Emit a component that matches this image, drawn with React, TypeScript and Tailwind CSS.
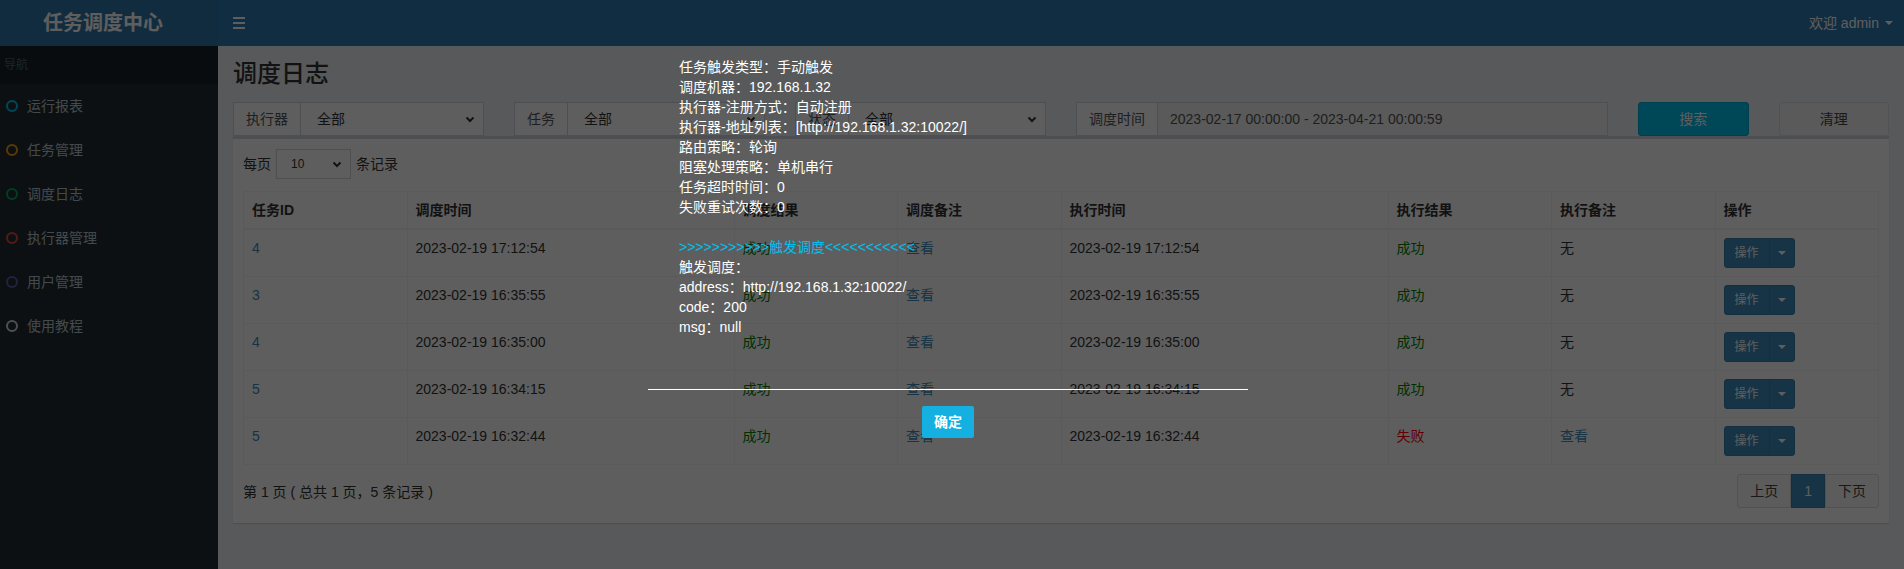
const menu = [
  { label: "运行报表", ring: "border-[#00c0ef]" },
  { label: "任务管理", ring: "border-[#f39c12]" },
  { label: "调度日志", ring: "border-[#00a65a]" },
  { label: "执行器管理", ring: "border-[#dd4b39]" },
  { label: "用户管理", ring: "border-[#605ca8]" },
  { label: "使用教程", ring: "border-[#d2d6de]" },
];

type LogRow = {
  jobId: string;
  triggerTime: string;
  handleTime: string;
  failed?: boolean;
};

const rows: LogRow[] = [
  { jobId: "4", triggerTime: "2023-02-19 17:12:54", handleTime: "2023-02-19 17:12:54" },
  { jobId: "3", triggerTime: "2023-02-19 16:35:55", handleTime: "2023-02-19 16:35:55" },
  { jobId: "4", triggerTime: "2023-02-19 16:35:00", handleTime: "2023-02-19 16:35:00" },
  { jobId: "5", triggerTime: "2023-02-19 16:34:15", handleTime: "2023-02-19 16:34:15" },
  { jobId: "5", triggerTime: "2023-02-19 16:32:44", handleTime: "2023-02-19 16:32:44", failed: true },
];

const detailLines = [
  "任务触发类型：手动触发",
  "调度机器：192.168.1.32",
  "执行器-注册方式：自动注册",
  "执行器-地址列表：[http://192.168.1.32:10022/]",
  "路由策略：轮询",
  "阻塞处理策略：单机串行",
  "任务超时时间：0",
  "失败重试次数：0",
];

const resultLines = ["触发调度：", "address：http://192.168.1.32:10022/", "code：200", "msg：null"];

function Chevron() {
  return (
    <svg width="10" height="7" viewBox="0 0 10 7" className="shrink-0">
      <path d="M1.5 1.5 L5 5 L8.5 1.5" fill="none" stroke="#333" strokeWidth="2" />
    </svg>
  );
}

function Caret({ color = "border-t-white" }: { color?: string }) {
  return <span className={`inline-block h-0 w-0 border-x-[4px] border-t-[4px] border-x-transparent ${color}`} />;
}

function SelectGroup({ label }: { label: string }) {
  return (
    <div className="col-span-2 flex h-[34px]">
      <span className="flex items-center border border-[#d2d6de] bg-white px-[12px] text-[#555]">{label}</span>
      <div className="flex flex-1 items-center justify-between border border-l-0 border-[#d2d6de] bg-white pl-[16px] pr-[8px] text-[#333]">
        <span>全部</span>
        <Chevron />
      </div>
    </div>
  );
}

export default function App() {
  return (
    <div className="relative h-[569px] w-full overflow-hidden font-['Liberation_Sans','Noto_Sans_CJK_SC',sans-serif] text-[14px] leading-[20px]">
      <header className="flex h-[46px]">
        <div className="flex w-[218px] items-center bg-[#2f78aa] pl-[43px] text-[20px] font-bold text-white">
          任务调度中心
        </div>
        <div className="flex flex-1 items-center justify-between bg-[#2e7ab2] pl-[15px] pr-[11px] text-white">
          <div className="flex w-[12px] flex-col gap-[3px]">
            <span className="h-[2px] bg-white" />
            <span className="h-[2px] bg-white" />
            <span className="h-[2px] bg-white" />
          </div>
          <div className="flex items-center gap-[6px]">
            <span>欢迎 admin</span>
            <Caret />
          </div>
        </div>
      </header>

      <div className="flex h-[523px]">
        <aside className="w-[218px] bg-[#222d32]">
          <div className="flex h-[38px] items-center bg-[#1a2226] pl-[4px] text-[12px] text-[#4b646f]">导航</div>
          <ul>
            {menu.map((m) => (
              <li key={m.label} className="flex h-[44px] items-center pl-[6px] text-[#b8c7ce]">
                <span className={`h-[12px] w-[12px] rounded-full border-2 ${m.ring}`} />
                <span className="ml-[9px]">{m.label}</span>
              </li>
            ))}
          </ul>
        </aside>

        <main className="flex-1 bg-[#ecf0f5] px-[15px] pt-[15px]">
          <h1 className="text-[24px] font-medium leading-[26px] text-[#333]">调度日志</h1>

          <div className="mt-[15px] grid grid-cols-12 gap-x-[30px]">
            <SelectGroup label="执行器" />
            <SelectGroup label="任务" />
            <SelectGroup label="状态" />
            <div className="col-span-4 flex h-[34px]">
              <span className="flex items-center border border-[#d2d6de] bg-white px-[12px] text-[#555]">调度时间</span>
              <div className="flex flex-1 items-center border border-l-0 border-[#d2d6de] bg-[#f4f4f4] px-[12px] text-[#555]">
                2023-02-17 00:00:00 - 2023-04-21 00:00:59
              </div>
            </div>
            <button className="col-span-1 h-[34px] rounded-[3px] border border-[#00acd6] bg-[#00c0ef] text-white">搜索</button>
            <button className="col-span-1 h-[34px] rounded-[3px] border border-[#ddd] bg-[#f4f4f4] text-[#444]">清理</button>
          </div>

          <section className="border-t-[3px] border-[#d2d6de] bg-white px-[10px] pb-[15px] pt-[10px] shadow-[0_1px_1px_rgba(0,0,0,0.1)]">
            <div className="flex h-[30px] items-center text-[#333]">
              <span>每页</span>
              <div className="mx-[5px] flex h-[30px] w-[75px] items-center justify-between border border-[#d2d6de] pl-[14px] pr-[8px] text-[12px]">
                <span>10</span>
                <Chevron />
              </div>
              <span>条记录</span>
            </div>

            <table className="mt-[12px] w-full table-fixed border-collapse border border-[#f4f4f4] text-left text-[#333]">
              <colgroup>
                <col className="w-[10%]" />
                <col className="w-[20%]" />
                <col className="w-[10%]" />
                <col className="w-[10%]" />
                <col className="w-[20%]" />
                <col className="w-[10%]" />
                <col className="w-[10%]" />
                <col className="w-[10%]" />
              </colgroup>
              <thead>
                <tr className="border-b-2 border-[#f4f4f4]">
                  {["任务ID", "调度时间", "调度结果", "调度备注", "执行时间", "执行结果", "执行备注", "操作"].map((h) => (
                    <th key={h} className="border border-b-2 border-[#f4f4f4] p-[8px] font-bold">
                      {h}
                    </th>
                  ))}
                </tr>
              </thead>
              <tbody>
                {rows.map((r, i) => (
                  <tr key={i}>
                    <td className="border border-[#f4f4f4] p-[8px] align-top text-[#3c8dbc]">{r.jobId}</td>
                    <td className="border border-[#f4f4f4] p-[8px] align-top">{r.triggerTime}</td>
                    <td className="border border-[#f4f4f4] p-[8px] align-top text-[#008000]">成功</td>
                    <td className="border border-[#f4f4f4] p-[8px] align-top text-[#3c8dbc]">查看</td>
                    <td className="border border-[#f4f4f4] p-[8px] align-top">{r.handleTime}</td>
                    <td className={`border border-[#f4f4f4] p-[8px] align-top ${r.failed ? "text-[#ff0000]" : "text-[#008000]"}`}>
                      {r.failed ? "失败" : "成功"}
                    </td>
                    <td className={`border border-[#f4f4f4] p-[8px] align-top ${r.failed ? "text-[#3c8dbc]" : ""}`}>
                      {r.failed ? "查看" : "无"}
                    </td>
                    <td className="border border-[#f4f4f4] p-[8px] align-top">
                      <div className="inline-flex h-[30px] rounded-[3px] border border-[#367fa9] bg-[#3c8dbc] text-[12px] text-white">
                        <span className="flex items-center px-[10px]">操作</span>
                        <span className="flex items-center border-l border-[#367fa9] px-[8px]">
                          <Caret />
                        </span>
                      </div>
                    </td>
                  </tr>
                ))}
              </tbody>
            </table>

            <div className="mt-[9px] flex h-[34px] items-start justify-between text-[#333]">
              <span className="pt-[8px]">第 1 页 ( 总共 1 页，5 条记录 )</span>
              <div className="flex">
                <span className="rounded-l-[3px] border border-[#ddd] bg-[#fafafa] px-[12px] py-[6px] text-[#444]">上页</span>
                <span className="border border-[#367fa9] bg-[#3c8dbc] px-[12px] py-[6px] text-white">1</span>
                <span className="rounded-r-[3px] border border-[#ddd] bg-[#fafafa] px-[12px] py-[6px] text-[#444]">下页</span>
              </div>
            </div>
          </section>
        </main>
      </div>

      <div className="absolute inset-0 bg-black/[0.63]" />

      <div className="absolute left-[648px] top-[57px] w-[600px] text-white">
        <div className="h-[332px] pl-[31px]">
          {detailLines.map((l) => (
            <div key={l}>{l}</div>
          ))}
          <div className="h-[20px]" />
          <div className="text-[#00c0ef]">&gt;&gt;&gt;&gt;&gt;&gt;&gt;&gt;&gt;&gt;&gt;触发调度&lt;&lt;&lt;&lt;&lt;&lt;&lt;&lt;&lt;&lt;&lt;</div>
          {resultLines.map((l) => (
            <div key={l}>{l}</div>
          ))}
        </div>
        <div className="flex justify-center border-t border-white pt-[16px]">
          <button className="h-[32px] w-[52px] rounded-[2px] bg-[#15b0e2] font-bold text-white">确定</button>
        </div>
      </div>
    </div>
  );
}
